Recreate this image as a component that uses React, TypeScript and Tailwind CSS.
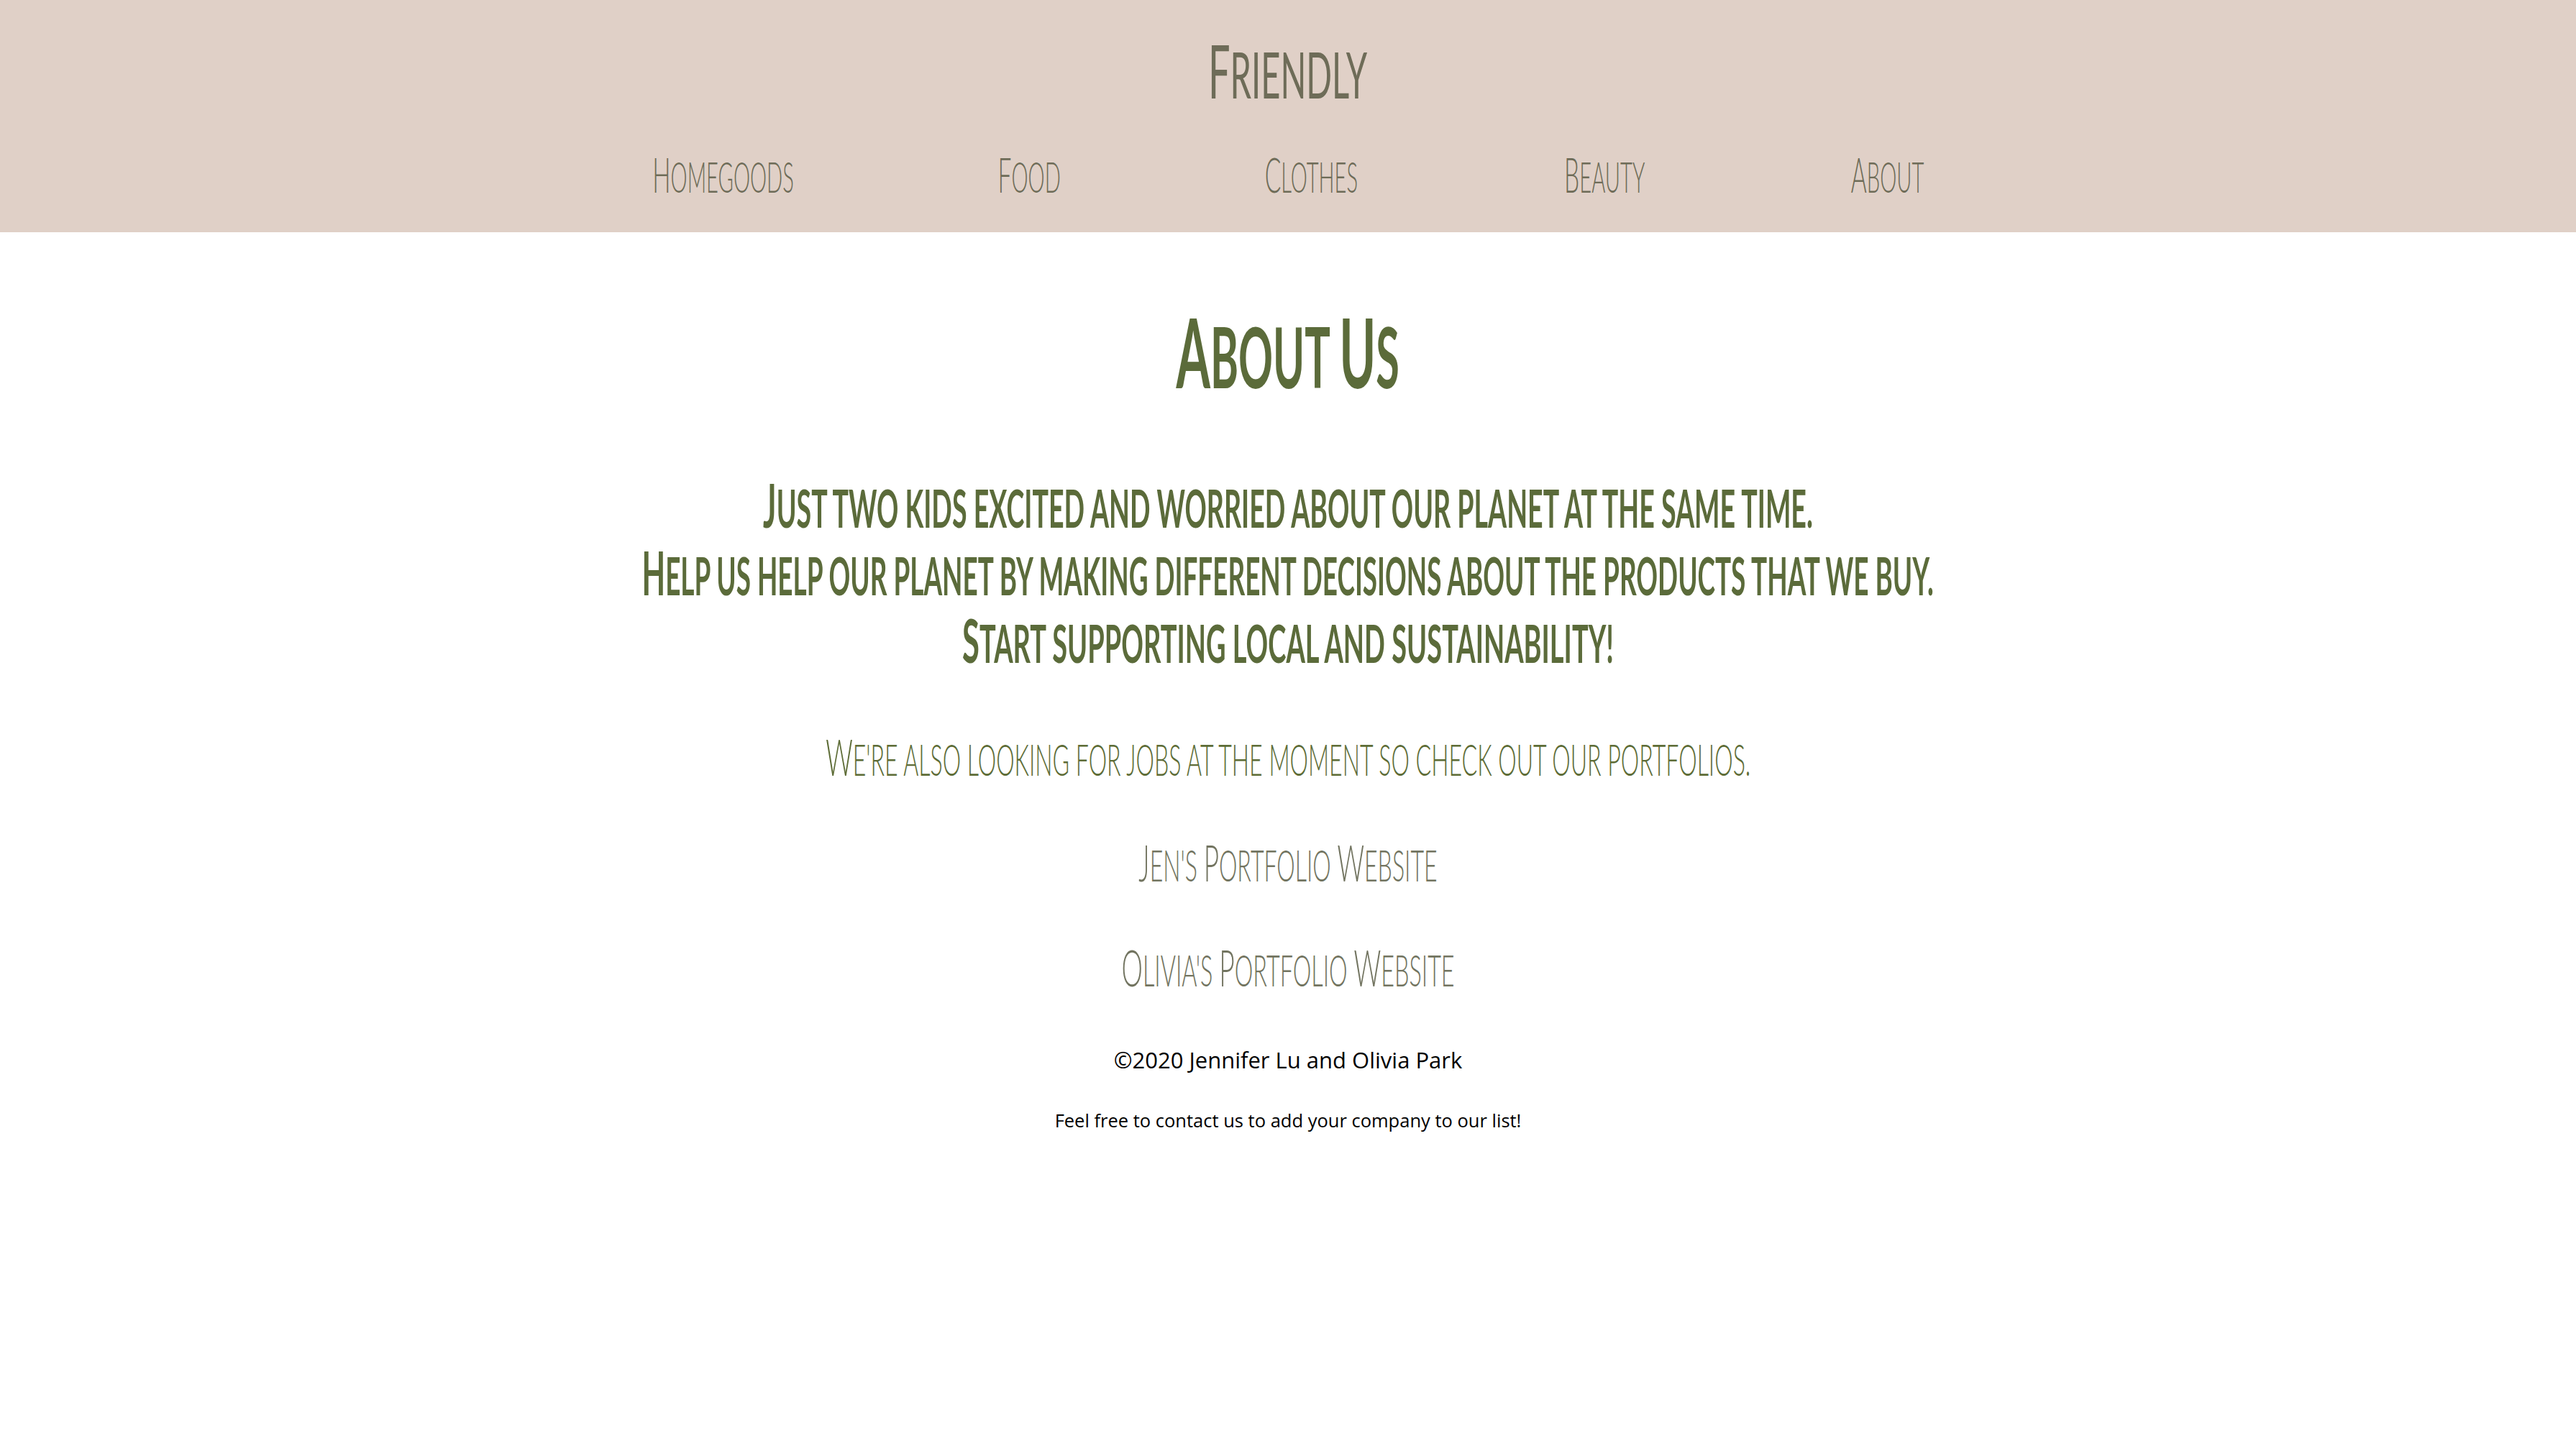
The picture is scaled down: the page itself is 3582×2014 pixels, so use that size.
const amatic = { fontFamily: '"Lato", "DejaVu Sans", sans-serif' };

const navItems = [
  { label: "Homegoods", w: "w-[199px]" },
  { label: "Food", w: "w-[82px]" },
  { label: "Clothes", w: "w-[132px]" },
  { label: "Beauty", w: "w-[114px]" },
  { label: "About", w: "w-[103px]" },
];

// capitals stay full size, the rest is set as slightly smaller capitals
function caps(text: string) {
  const runs = text.match(/[A-Z]+|[^A-Z]+/g) ?? [];
  return runs.map((run, i) =>
    /[A-Z]/.test(run[0]) ? (
      <span key={i}>{run}</span>
    ) : (
      <span key={i} className="text-[0.87em] leading-none uppercase">
        {run}
      </span>
    )
  );
}

function Squeeze({
  text,
  className = "",
}: {
  text: string;
  className?: string;
}) {
  // narrow stand-in for the hand-drawn condensed face
  return (
    <span
      className={`inline-block origin-center whitespace-nowrap ${className}`}
      style={amatic}
    >
      {caps(text)}
    </span>
  );
}

export default function App() {
  return (
    <div className="min-h-screen w-full bg-white">
      <header className="h-[323px] w-full bg-[#e0d0c7] pt-[37px]">
        <div className="flex justify-center">
          <Squeeze
            text="Friendly"
            className="scale-x-[0.53] text-[102px] leading-[1.2] font-normal text-[#6e6c58]"
          />
        </div>

        <nav className="mt-[43px] flex justify-center gap-[285px]">
          {navItems.map((item) => (
            <a
              key={item.label}
              href="#"
              className={`${item.w} flex justify-center`}
            >
              <Squeeze
                text={item.label}
                className="scale-x-[0.5] text-[67px] leading-[1.2] font-light text-[#6e6c58]"
              />
            </a>
          ))}
        </nav>
      </header>

      <main className="flex flex-col items-center">
        <h1 className="mt-[84px] flex justify-center">
          <Squeeze
            text="About Us"
            className="scale-x-[0.506] text-[135px] leading-[1.2] font-bold text-[#5b6b3a]"
          />
        </h1>

        <div className="mt-[86px] flex flex-col items-center">
          <Squeeze
            text="Just two kids excited and worried about our planet at the same time."
            className="scale-x-[0.514] text-[84px] leading-[94px] font-bold text-[#5b6b3a]"
          />
          <Squeeze
            text="Help us help our planet by making different decisions about the products that we buy."
            className="scale-x-[0.505] text-[84px] leading-[94px] font-bold text-[#5b6b3a]"
          />
          <Squeeze
            text="Start supporting local and sustainability!"
            className="scale-x-[0.52] text-[84px] leading-[94px] font-bold text-[#5b6b3a]"
          />
        </div>

        <p className="mt-[73px] flex justify-center">
          <Squeeze
            text="We're also looking for jobs at the moment so check out our portfolios."
            className="scale-x-[0.527] text-[70px] leading-[1.2] font-light text-[#5d6c36]"
          />
        </p>

        <a href="#" className="mt-[63px] flex justify-center">
          <Squeeze
            text="Jen's Portfolio Website"
            className="scale-x-[0.527] text-[70px] leading-[1.2] font-light text-[#727460]"
          />
        </a>

        <a href="#" className="mt-[62px] flex justify-center">
          <Squeeze
            text="Olivia's Portfolio Website"
            className="scale-x-[0.531] text-[70px] leading-[1.2] font-light text-[#727460]"
          />
        </a>

        <footer
          className="flex flex-col items-center text-black"
          style={{ fontFamily: '"Open Sans", "Liberation Sans", sans-serif' }}
        >
          <p className="mt-[66px] text-[31px] leading-[1.362]">
            ©2020 Jennifer Lu and Olivia Park
          </p>
          <p className="mt-[46px] text-[25.5px] leading-[1.362]">
            Feel free to contact us to add your company to our list!
          </p>
        </footer>
      </main>
    </div>
  );
}
